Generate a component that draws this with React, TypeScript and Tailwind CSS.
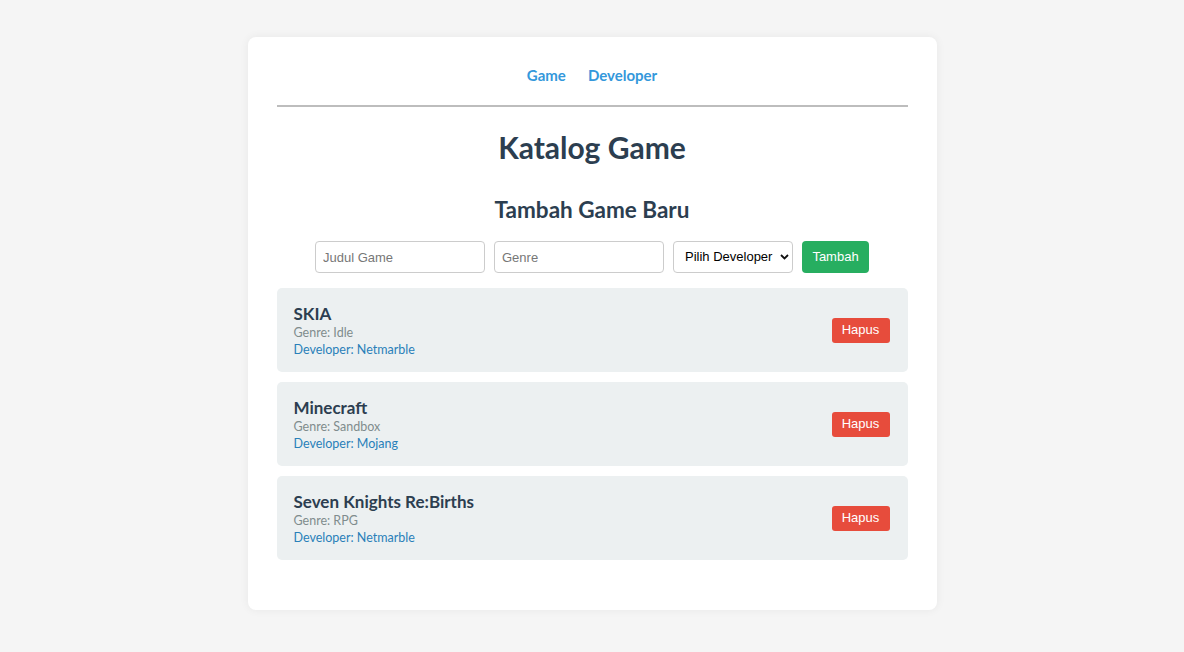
import { useState } from 'react'

type Game = { id: number; title: string; genre: string; developer: string }

const initialGames: Game[] = [
  { id: 1, title: 'SKIA', genre: 'Idle', developer: 'Netmarble' },
  { id: 2, title: 'Minecraft', genre: 'Sandbox', developer: 'Mojang' },
  { id: 3, title: 'Seven Knights Re:Births', genre: 'RPG', developer: 'Netmarble' },
]

export default function App() {
  const [games, setGames] = useState(initialGames)

  return (
    <div className="min-h-screen bg-[#f5f5f5] pt-[37px] font-['Lato','Noto_Sans',sans-serif]">
      <div className="mx-auto w-[689px] rounded-lg bg-white px-[29px] pt-[29px] pb-[50px] shadow-[0_0_10px_rgba(0,0,0,0.06)]">
        {/* Nav */}
        <nav className="flex items-center justify-center gap-[22px] border-b-2 border-[#bdbdbd] pb-[21px]">
          <a href="#" className="text-[15px] leading-[18px] font-bold text-[#3498db]">Game</a>
          <a href="#" className="text-[15px] leading-[18px] font-bold text-[#3498db]">Developer</a>
        </nav>

        <h1 className="mt-[22px] text-center text-[30px] leading-[36px] font-bold text-[#2c3e50]">Katalog Game</h1>

        <h2 className="mt-[31px] text-center text-[22.5px] leading-[27px] font-bold text-[#2c3e50]">Tambah Game Baru</h2>

        {/* Form */}
        <div className="mt-[18px] flex justify-center gap-[9px] font-['Liberation_Sans',Arial,sans-serif] text-[13px]">
          <input
            placeholder="Judul Game"
            className="h-[32px] w-[170px] rounded-[4px] border border-[#ccc] px-[7px] text-[13px] text-[#333] placeholder:text-[#777] outline-none"
          />
          <input
            placeholder="Genre"
            className="h-[32px] w-[170px] rounded-[4px] border border-[#ccc] px-[7px] text-[13px] text-[#333] placeholder:text-[#777] outline-none"
          />
          <div className="relative">
            <select className="h-[32px] w-[120px] appearance-none rounded-[4px] border border-[#ccc] bg-white pl-[11px] text-[13px] text-black outline-none">
              <option>Pilih Developer</option>
              <option>Netmarble</option>
              <option>Mojang</option>
            </select>
            <svg className="pointer-events-none absolute top-[13px] right-[4px]" width="9" height="6" viewBox="0 0 9 6">
              <path d="M1 1l3.5 3.5L8 1" fill="none" stroke="#111" strokeWidth="1.8" />
            </svg>
          </div>
          <button className="h-[32px] w-[67px] rounded-[4px] bg-[#27ae60] text-[13px] text-white">Tambah</button>
        </div>

        {/* List */}
        <div className="mt-[15px] flex flex-col gap-[10px]">
          {games.map((g) => (
            <div key={g.id} className="flex h-[84px] items-center justify-between rounded-[5px] bg-[#ecf0f1] pr-[18px] pl-[17px]">
              <div className="flex flex-col">
                <div className="text-[17px] leading-[21px] font-bold text-[#2c3e50]">{g.title}</div>
                <div className="text-[12.5px] leading-[17px] text-[#7f8c8d]">Genre: {g.genre}</div>
                <div className="text-[12.5px] leading-[17px] text-[#2980b9]">Developer: {g.developer}</div>
              </div>
              <button
                onClick={() => setGames(games.filter((x) => x.id !== g.id))}
                className="h-[25px] w-[58px] rounded-[3px] bg-[#e74c3c] font-['Liberation_Sans',Arial,sans-serif] text-[13px] text-white"
              >
                Hapus
              </button>
            </div>
          ))}
        </div>
      </div>
    </div>
  )
}
